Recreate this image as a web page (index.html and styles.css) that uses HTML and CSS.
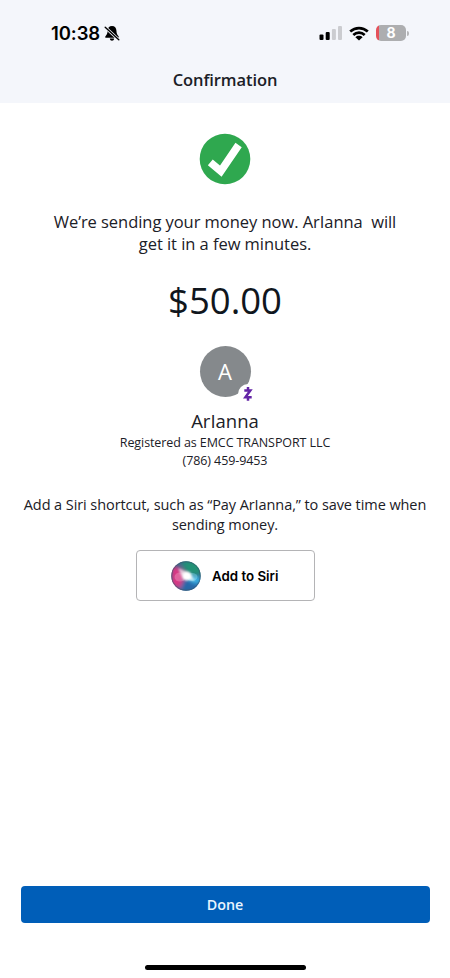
FILE: index.html
```html
<!DOCTYPE html>
<html lang="en">
<head>
<meta charset="utf-8">
<title>Confirmation</title>
<link rel="stylesheet" href="styles.css">
</head>
<body>
<div class="screen">
  <header class="header">
    <div class="status">
      <span class="time">10:38</span>
      <svg class="bell" width="16" height="17" viewBox="0 0 16 17">
        <path d="M8 1C5.200 1 3.700 3 3.600 5.600 3.500 8.800 2.800 9.700 1.500 11.200c-.6.8-.3 1.500.6 1.500h11.800c.9 0 1.200-.7.6-1.500-1.300-1.500-2-2.400-2.100-5.600C12.300 3 10.800 1 8 1ZM5.800 13.600h4.400C10 15 9.100 15.800 8 15.800S6 15 5.800 13.600Z"/>
        <path d="M1 2.200 15 15" stroke="#f4f6fb" stroke-width="3"/>
        <path d="M1.200 2.200 14.800 14.800" stroke="#000" stroke-width="1.400" stroke-linecap="round"/>
      </svg>
      <svg class="signal" width="24" height="16" viewBox="0 0 24 16">
        <rect x="0.500" y="9.500" width="4" height="5.500" rx="1.100"/>
        <rect x="6.700" y="7" width="4" height="8" rx="1.100"/>
        <rect x="12.900" y="4" width="4" height="11" rx="1.100" fill="#cbccd0"/>
        <rect x="19" y="1" width="4" height="14" rx="1.100" fill="#cbccd0"/>
      </svg>
      <svg class="wifi" width="20" height="15" viewBox="0 0 20 15">
        <g fill="none" stroke="#000" stroke-width="2.700">
          <path d="M1.200 5.500C6.300.9 13.700.9 18.800 5.500"/>
          <path d="M4.300 8.900c3.300-3 8.100-3 11.400 0"/>
        </g>
        <path d="M6.400 11.200c2-1.800 5.200-1.800 7.200 0L10 14.600Z"/>
      </svg>
      <div class="battery"><span>8</span></div>
      <i class="battery-tip"></i>
    </div>
    <h1 class="title">Confirmation</h1>
  </header>
  <main class="content">
    <svg class="check" width="52" height="52" viewBox="0 0 52 52">
      <circle cx="26" cy="26" r="25.300" fill="#2fa84f"/>
      <path d="M11.300 29.400 21.800 38.200 39.600 12" fill="none" stroke="#fff" stroke-width="7.600"/>
    </svg>
    <p class="message"><span class="line">We’re sending your money now. ArIanna&nbsp; will</span><span class="line">get it in a few minutes.</span></p>
    <div class="amount">$50.00</div>
    <div class="avatar">A
      <svg class="zelle" width="20" height="20" viewBox="0 0 20 20">
        <circle cx="10" cy="10" r="10" fill="#fff"/>
        <path d="M6.300 6.500h6L7.400 13.300h6.300M10 3v3M10 13.800v3" fill="none" stroke="#6324a6" stroke-width="2.500"/>
      </svg>
    </div>
    <div class="name">ArIanna</div>
    <div class="detail">Registered as EMCC TRANSPORT LLC</div>
    <div class="detail">(786) 459-9453</div>
    <p class="hint"><span class="line">Add a Siri shortcut, such as “Pay ArIanna,” to save time when</span><span class="line">sending money.</span></p>
    <div class="siri-button">
      <svg width="30" height="30" viewBox="0 0 30 30">
        <defs>
          <clipPath id="orb"><circle cx="15" cy="15" r="14.700"/></clipPath>
          <filter id="soft" x="-50%" y="-50%" width="200%" height="200%"><feGaussianBlur stdDeviation="2.200"/></filter>
          <filter id="glow" x="-50%" y="-50%" width="200%" height="200%"><feGaussianBlur stdDeviation="1.300"/></filter>
        </defs>
        <g clip-path="url(#orb)">
          <path d="M0 0h30v30H0Z" fill="#35688c"/>
          <g filter="url(#soft)">
            <path d="M10 0h20v14L16 13Z" fill="#239276"/>
            <path d="M0 5 8 6l7 8-6 14-9-4Z" fill="#d83984"/>
            <path d="M8 30 13 18l17-2v14Z" fill="#2668a8"/>
            <path d="M16 16h14v6h-8Z" fill="#38b4e8"/>
          </g>
          <ellipse cx="9" cy="16" rx="5.500" ry="4.500" fill="#fff" opacity=".22"/>
          <ellipse cx="21" cy="16" rx="5.500" ry="4" fill="#9df2ff" opacity=".35"/>
          <g filter="url(#glow)" fill="#fff">
            <circle cx="16" cy="15" r="4.500"/>
            <path d="M7 7 19 12 24 20 12 18Z" opacity=".7"/>
          </g>
        </g>
        <circle cx="15" cy="15" r="14.300" fill="none" stroke="#3b5262" stroke-width=".8" opacity=".6"/>
      </svg>
      <span class="siri-label">Add to Siri</span>
    </div>
  </main>
  <footer class="footer">
    <div class="done">Done</div>
    <div class="home"></div>
  </footer>
</div>
</body>
</html>
```
FILE: styles.css
```css
* { box-sizing: border-box; }
body {
  margin: 0;
  background: #fff;
  color: #1b2027;
  font-family: "Open Sans", sans-serif;
}
.screen {
  width: 450px;
  height: 978px;
  display: flex;
  flex-direction: column;
  overflow: hidden;
}
.header { height: 103px; background: #f4f6fb; }
.status {
  height: 66px;
  padding: 0 41px 0 51px;
  display: flex;
  align-items: center;
}
.time {
  width: 50px;
  font: 600 18.500px/24px Inter, sans-serif;
  letter-spacing: -0.100px;
  color: #000;
  white-space: nowrap;
}
.bell { margin-left: 3px; }
.signal { margin-left: auto; }
.wifi { margin-left: 6px; }
.battery {
  width: 30px;
  height: 16px;
  margin-left: 7px;
  border-radius: 5px;
  background: linear-gradient(90deg, #e4515b 3px, #adaeb0 3px);
  color: #fff;
  font: 700 14px/16px Inter, sans-serif;
  text-align: center;
}
.battery-tip {
  width: 2px;
  height: 5px;
  margin-left: 1px;
  border-radius: 0 2px 2px 0;
  background: #b5b6b8;
}
.title {
  margin: 3px 0 0;
  font-size: 16.500px;
  line-height: 22px;
  font-weight: 600;
  letter-spacing: -0.080px;
  text-align: center;
}
.content {
  flex: 1;
  display: flex;
  flex-direction: column;
  align-items: center;
  padding-top: 30px;
}
.line { display: block; white-space: nowrap; }
.message {
  margin: 26px 0 0;
  font-size: 16.500px;
  line-height: 22px;
  letter-spacing: -0.050px;
  text-align: center;
}
.amount {
  margin-top: 20px;
  font-size: 36.500px;
  line-height: 50px;
  color: #10161d;
}
.avatar {
  position: relative;
  width: 51px;
  height: 51px;
  margin-top: 21px;
  border-radius: 50%;
  background: #85898c;
  color: #fff;
  font-size: 22px;
  line-height: 50px;
  text-align: center;
}
.zelle { position: absolute; left: 38px; top: 38px; }
.name { margin-top: 11px; font-size: 18.500px; line-height: 26px; }
.detail {
  font-size: 12.500px;
  line-height: 18px;
  letter-spacing: -0.090px;
  white-space: nowrap;
}
.hint {
  margin: 25px 0 0;
  font-size: 14.500px;
  line-height: 19.500px;
  letter-spacing: -0.080px;
  text-align: center;
}
.siri-button {
  width: 179px;
  height: 51px;
  margin: 16px 0 0 1px;
  border: 1px solid #b4b4b6;
  border-radius: 4px;
  display: flex;
  align-items: center;
  padding-left: 34px;
  gap: 11px;
}
.siri-label {
  color: #000;
  font: 600 13.300px/20px Inter, sans-serif;
  white-space: nowrap;
}
.footer {
  height: 92px;
  display: flex;
  flex-direction: column;
  align-items: center;
}
.done {
  width: 409px;
  height: 37px;
  border-radius: 4px;
  background: #005eb8;
  color: #e9f5ff;
  font-size: 14.300px;
  line-height: 37px;
  font-weight: 600;
  text-align: center;
}
.home {
  width: 161px;
  height: 5px;
  margin-top: 42px;
  border-radius: 3px;
  background: #000;
}
```
